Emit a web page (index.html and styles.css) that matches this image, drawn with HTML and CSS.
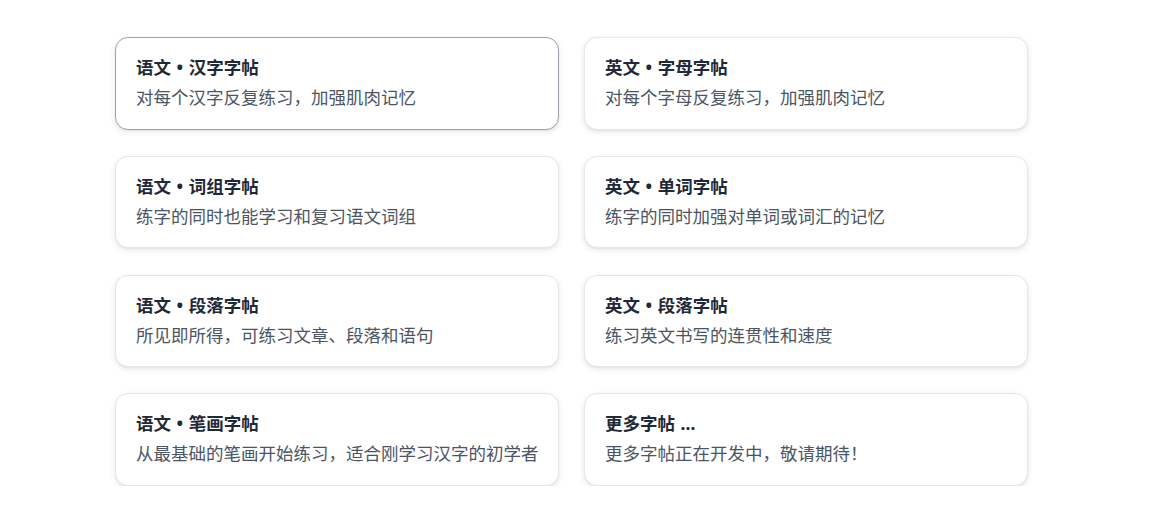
FILE: index.html
```html
<!DOCTYPE html>
<html lang="zh-CN">
<head>
<meta charset="utf-8">
<title>字帖</title>
<link rel="stylesheet" href="styles.css">
</head>
<body>
<main class="page">
  <div class="grid">
    <div class="card card-active">
      <div class="card-title">语文 • 汉字字帖</div>
      <div class="card-desc">对每个汉字反复练习，加强肌肉记忆</div>
    </div>
    <div class="card">
      <div class="card-title">英文 • 字母字帖</div>
      <div class="card-desc">对每个字母反复练习，加强肌肉记忆</div>
    </div>
    <div class="card">
      <div class="card-title">语文 • 词组字帖</div>
      <div class="card-desc">练字的同时也能学习和复习语文词组</div>
    </div>
    <div class="card">
      <div class="card-title">英文 • 单词字帖</div>
      <div class="card-desc">练字的同时加强对单词或词汇的记忆</div>
    </div>
    <div class="card">
      <div class="card-title">语文 • 段落字帖</div>
      <div class="card-desc">所见即所得，可练习文章、段落和语句</div>
    </div>
    <div class="card">
      <div class="card-title">英文 • 段落字帖</div>
      <div class="card-desc">练习英文书写的连贯性和速度</div>
    </div>
    <div class="card">
      <div class="card-title">语文 • 笔画字帖</div>
      <div class="card-desc">从最基础的笔画开始练习，适合刚学习汉字的初学者</div>
    </div>
    <div class="card">
      <div class="card-title">更多字帖 ...</div>
      <div class="card-desc">更多字帖正在开发中，敬请期待！</div>
    </div>
  </div>
</main>
</body>
</html>
```

FILE: styles.css
```css
* {
  box-sizing: border-box;
}

html, body {
  margin: 0;
  padding: 0;
  background: #ffffff;
}

body {
  font-family: "Noto Sans", "Noto Sans CJK SC", sans-serif;
  font-size: 17.5px;
}

.page {
  padding: 37px 0 0 115px;
}

.grid {
  display: grid;
  grid-template-columns: 444px 444px;
  column-gap: 25px;
  row-gap: 26.3px;
}

.card {
  height: 92.5px;
  background: #ffffff;
  border: 1px solid #e5e7eb;
  border-radius: 13px;
  padding: 15px 12px 16px 20px;
  box-shadow: 0 2px 6px rgba(0, 0, 0, 0.09), 0 1px 2px rgba(0, 0, 0, 0.05);
}

.card-active {
  border-color: #9ca3af;
}

.card-title {
  font-weight: 700;
  color: #1f2937;
  line-height: 28px;
  word-spacing: 1px;
}

.card-desc {
  margin-top: 2px;
  color: #4b5563;
  line-height: 28px;
  white-space: nowrap;
}
```
